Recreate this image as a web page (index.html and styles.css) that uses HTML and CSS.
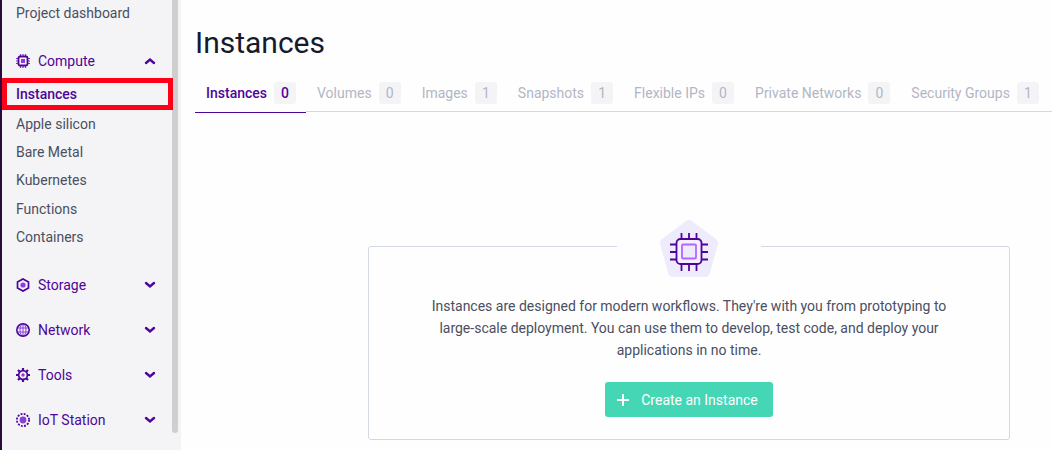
FILE: index.html
```html
<!DOCTYPE html>
<html lang="en">
<head>
<meta charset="utf-8">
<title>Instances</title>
<link rel="stylesheet" href="styles.css">
</head>
<body>
<div class="app">
  <aside class="sidebar">
    <nav class="nav">
      <a class="nav-link nav-dashboard" href="#">Project dashboard</a>
      <button class="group group-open" type="button" aria-expanded="true">
        <svg class="group-icon" viewBox="0 0 14 14"><path d="M4.500 0v14M7 0v14M9.500 0v14M0 4.500h14M0 7h14M0 9.500h14" stroke="#7a2fc8" stroke-width="1.200"/><rect x="2.500" y="2.500" width="9" height="9" rx="1.500" fill="#f4f4f7" stroke="#4f0599" stroke-width="1.800"/><rect x="5" y="5" width="4" height="4" fill="#8a3fd8"/></svg>
        <span>Compute</span>
        <svg class="chevron" viewBox="0 0 10 6"><path d="M1 5l4-3.500L9 5"/></svg>
      </button>
      <ul class="sublist">
        <li class="marked"><a class="nav-link current" href="#" aria-current="page">Instances</a></li>
        <li><a class="nav-link" href="#">Apple silicon</a></li>
        <li><a class="nav-link" href="#">Bare Metal</a></li>
        <li><a class="nav-link" href="#">Kubernetes</a></li>
        <li><a class="nav-link" href="#">Functions</a></li>
        <li><a class="nav-link" href="#">Containers</a></li>
      </ul>
      <button class="group" type="button" aria-expanded="false">
        <svg class="group-icon" viewBox="0 0 14 14"><path d="M7 .9l5.500 3.100v6L7 13.100 1.500 10V4z" fill="none" stroke="#4f0599" stroke-width="1.700"/><circle cx="7" cy="7" r="2.600" fill="#8a3fd8"/></svg>
        <span>Storage</span>
        <svg class="chevron" viewBox="0 0 10 6"><path d="M1 1l4 3.500L9 1"/></svg>
      </button>
      <button class="group" type="button" aria-expanded="false">
        <svg class="group-icon" viewBox="0 0 14 14"><g fill="none"><path d="M1 5h12M1 9h12M7 1v12" stroke="#8a3fd8"/><ellipse cx="7" cy="7" rx="3" ry="6" stroke="#8a3fd8"/><circle cx="7" cy="7" r="6.200" stroke="#4f0599" stroke-width="1.600"/></g></svg>
        <span>Network</span>
        <svg class="chevron" viewBox="0 0 10 6"><path d="M1 1l4 3.500L9 1"/></svg>
      </button>
      <button class="group" type="button" aria-expanded="false">
        <svg class="group-icon" viewBox="0 0 14 14"><g fill="none" stroke="#4f0599"><path d="M7 0v2.500M7 11.500V14M0 7h2.500M11.500 7H14M2 2l2 2M10 10l2 2M2 12l2-2M10 4l2-2" stroke-width="2.200"/><circle cx="7" cy="7" r="4.400" stroke-width="1.700"/></g><circle cx="7" cy="7" r="1.700" fill="#8a3fd8"/></svg>
        <span>Tools</span>
        <svg class="chevron" viewBox="0 0 10 6"><path d="M1 1l4 3.500L9 1"/></svg>
      </button>
      <button class="group" type="button" aria-expanded="false">
        <svg class="group-icon" viewBox="0 0 14 14"><circle cx="7" cy="7" r="6.100" fill="none" stroke="#4f0599" stroke-width="1.800" stroke-dasharray="1.900 1.294"/><circle cx="7" cy="7" r="3.400" fill="#8a3fd8"/></svg>
        <span>IoT Station</span>
        <svg class="chevron" viewBox="0 0 10 6"><path d="M1 1l4 3.500L9 1"/></svg>
      </button>
    </nav>
    <div class="scroll-thumb"></div>
  </aside>
  <main class="main">
    <h1 class="title">Instances</h1>
    <nav class="tabs">
      <a class="tab active" href="#">Instances <span class="count">0</span></a>
      <a class="tab" href="#">Volumes <span class="count">0</span></a>
      <a class="tab" href="#">Images <span class="count">1</span></a>
      <a class="tab" href="#">Snapshots <span class="count">1</span></a>
      <a class="tab" href="#">Flexible IPs <span class="count">0</span></a>
      <a class="tab" href="#">Private Networks <span class="count">0</span></a>
      <a class="tab" href="#">Security Groups <span class="count">1</span></a>
    </nav>
    <section class="empty">
      <div class="emblem">
        <svg width="60" height="58" viewBox="0 0 60 58"><path d="M30 5L54 23L46 52H14L6 23Z" fill="#eeebfd" stroke="#eeebfd" stroke-width="10" stroke-linejoin="round"/><path d="M22.500 13v6M30 13v6M37.500 13v6M22.500 44v7M30 44v7M37.500 44v7M11 24.500h6M11 32h6M11 39.500h6M43 24.500h6M43 32h6M43 39.500h6" stroke="#4f0599" stroke-width="1.800"/><rect x="17.500" y="19" width="25" height="25" rx="4" fill="#f5f0ff" stroke="#4f0599" stroke-width="1.800"/><rect x="23" y="24.500" width="14" height="14" rx="1" fill="#eeebfd" stroke="#b566ff" stroke-width="1.800"/></svg>
      </div>
      <p class="lead">Instances are designed for modern workflows. They're with you from prototyping to large-scale deployment. You can use them to develop, test code, and deploy your applications in no time.</p>
      <button class="create" type="button">
        <svg width="14" height="14" viewBox="0 0 14 14"><path d="M7 1v12M1 7h12" stroke="#fff" stroke-width="2"/></svg>
        <span>Create an Instance</span>
      </button>
    </section>
  </main>
</div>
</body>
</html>
```
FILE: styles.css
```css
* { box-sizing: border-box; }
body {
  margin: 0;
  background: #fefefe;
  color: #4a4f62;
  font: 14px/22px Roboto, "Noto Sans", sans-serif;
}
a { color: inherit; text-decoration: none; }
button { border: 0; background: none; color: inherit; font: inherit; cursor: pointer; }
.app { display: flex; min-height: 100vh; }

.sidebar {
  display: flex;
  flex: none;
  width: 181px;
  padding-right: 3px;
  border-left: 2px solid #2a0a3c;
  background: #f4f4f7;
}
.nav { flex: 1; }
.nav-link { display: flex; align-items: center; height: 100%; padding-left: 14px; }
.nav-dashboard { height: 26px; margin-bottom: 16px; }
.group {
  display: flex;
  align-items: center;
  gap: 8px;
  width: 100%;
  height: 45px;
  padding: 0 17px 0 14px;
  color: #4f0599;
}
.group-open { height: 38px; }
.group-icon { width: 14px; height: 14px; }
.chevron {
  width: 10px;
  height: 6px;
  margin-left: auto;
  overflow: visible;
  fill: none;
  stroke: #4f0599;
  stroke-width: 2.4;
  stroke-linecap: round;
}
.sublist {
  display: grid;
  grid-auto-rows: 1fr;
  height: 171px;
  margin: 0 0 11px;
  padding: 0;
  list-style: none;
}
.marked {
  position: relative;
  z-index: 1;
  margin: -2px -1px 0 0;
  border: 5px solid #ff0019;
}
.marked .nav-link { padding-left: 9px; }
.current { color: #4f0599; font-weight: 500; }
.scroll-thumb {
  width: 6px;
  height: 433px;
  border-radius: 0 0 3px 3px;
  background: #cfcfd0;
}

.main { flex: 1; min-width: 0; padding-left: 14px; }
.title {
  margin: 23px 0 19px;
  color: #151a2d;
  font-size: 30px;
  font-weight: 400;
  line-height: 40px;
}
.tabs {
  display: flex;
  height: 30px;
  border-bottom: 1px solid #d4d8e6;
  color: #b2b6c4;
}
.tab {
  display: flex;
  align-items: flex-start;
  gap: 7px;
  height: 31px;
  padding: 0 10px 0 11px;
  white-space: nowrap;
}
.tab.active {
  border-bottom: 1px solid #4f0599;
  background: #fefefe;
  color: #4f0599;
  font-weight: 500;
}
.count { width: 22px; border-radius: 3px; background: #f4f4f7; text-align: center; }

.empty {
  display: flex;
  flex-direction: column;
  align-items: center;
  margin: 134px 42px 10px 173px;
  padding: 0 56px 22px;
  border: 1px solid #d4d8e6;
  border-radius: 3px;
}
.emblem {
  display: flex;
  justify-content: center;
  width: 144px;
  margin-top: -27px;
  background: #fefefe;
}
.lead { margin: 17px 0 21px; text-align: center; }
.create {
  display: flex;
  align-items: center;
  gap: 11px;
  height: 35px;
  padding: 0 15px 0 11px;
  border-radius: 3px;
  background: #45d6b5;
  color: #fff;
}
```
